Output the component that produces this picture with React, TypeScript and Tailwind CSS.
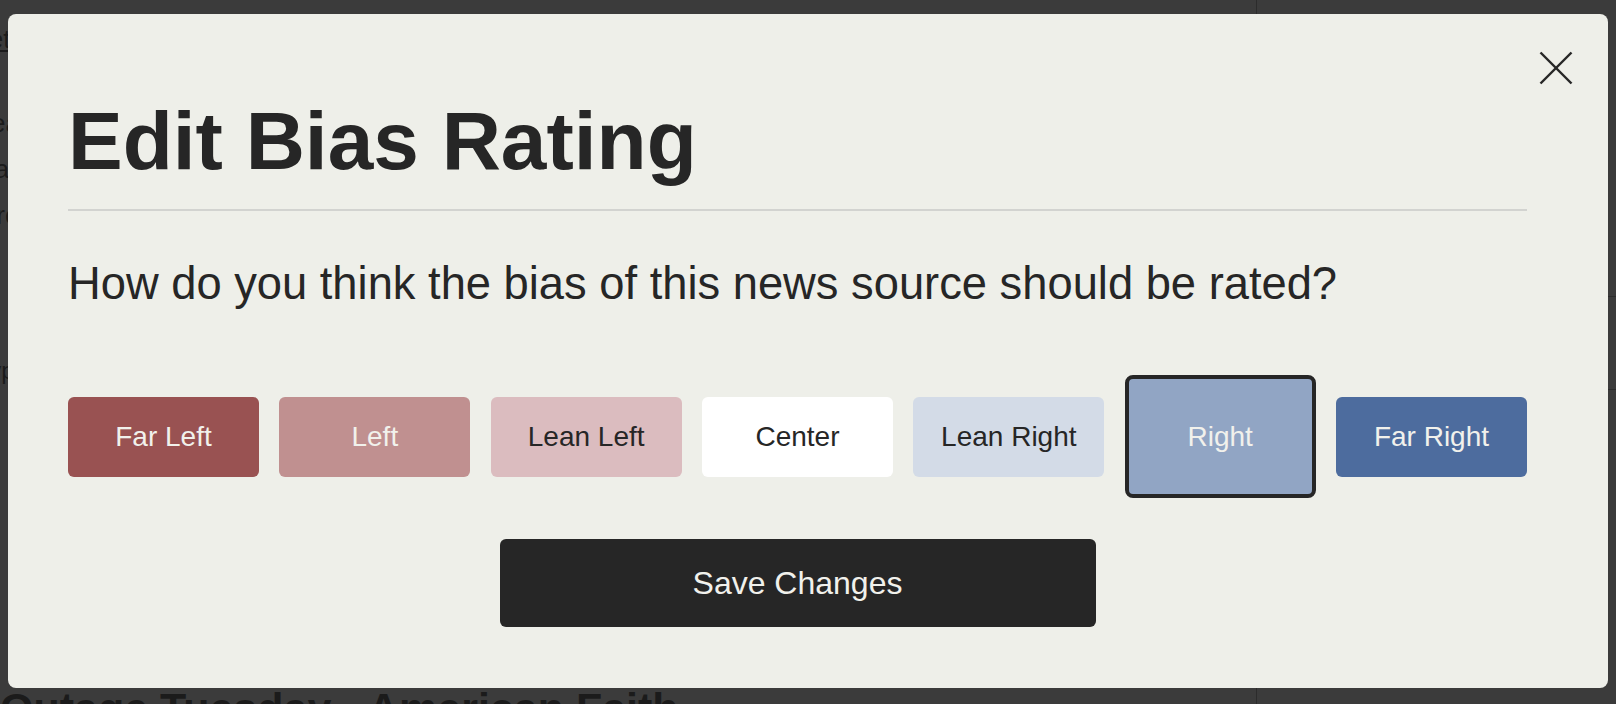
const ratings = [
  { label: "Far Left", cls: "bg-[#995252] text-[#f1f1ec]" },
  { label: "Left", cls: "bg-[#c09090] text-[#f1f1ec]" },
  { label: "Lean Left", cls: "bg-[#dbbcbf] text-[#262626]" },
  { label: "Center", cls: "bg-white text-[#262626]" },
  { label: "Lean Right", cls: "bg-[#d3dbe7] text-[#262626]" },
  { label: "Right", cls: "bg-[#91a5c4] text-[#f1f1ec]" },
  { label: "Far Right", cls: "bg-[#4d6c9e] text-[#f1f1ec]" },
];

const selected = "Right";

function BackgroundPage() {
  // dimmed page behind the modal, only slivers of it show
  return (
    <div className="flex h-full w-full">
      <div className="flex w-[1257px] shrink-0 flex-col border-r border-[#2c2c2c] pt-[20px] text-[#1b1b1b]">
        <span className="ml-[-30px] text-[26px] underline">Details</span>
        <div className="ml-[-24px] mt-[50px] flex flex-col gap-[18px] text-[26px] leading-[28px]">
          <span>Year</span>
          <span>Rating</span>
          <span>Group</span>
        </div>
        <div className="ml-[-24px] mt-[100px] flex flex-col gap-[6px] text-[24px] leading-[24px]">
          <span>e.</span>
          <span>Type</span>
        </div>
        <div className="mt-[176px] h-px w-full bg-[#2c2c2c]" />
        <div className="mt-[128px] whitespace-nowrap text-[43px] font-bold leading-none">
          Outage Tuesday - American Faith
        </div>
      </div>
      <div className="flex flex-1 flex-col pt-[296px]">
        <div className="h-px w-full bg-[#2c2c2c]" />
        <div className="ml-[360px] mt-[44px] h-[22px] w-[4px] bg-[#151515]" />
        <div className="mt-[26px] h-px w-full bg-[#2c2c2c]" />
      </div>
    </div>
  );
}

function CloseIcon() {
  return (
    <svg width="34" height="34" viewBox="0 0 34 34" fill="none" stroke="#262626" strokeWidth="2.4">
      <line x1="1.5" y1="1.5" x2="32.5" y2="32.5" />
      <line x1="32.5" y1="1.5" x2="1.5" y2="32.5" />
    </svg>
  );
}

export default function App() {
  return (
    <div className="relative h-[704px] w-[1616px] overflow-hidden bg-[#3b3b3b] font-['Liberation_Sans',Arial,sans-serif]">
      <BackgroundPage />

      <div className="absolute left-[8px] top-[14px] flex h-[674px] w-[1600px] flex-col rounded-lg bg-[#eeefe9] pl-[60px] pr-[81px] pt-[86px] text-[#262626]">
        <button type="button" aria-label="Close" className="absolute right-[35px] top-[37px]">
          <CloseIcon />
        </button>

        <h1 className="text-[82px] font-bold leading-none">Edit Bias Rating</h1>
        <div className="mt-[27px] h-[2px] w-full bg-[#d2d3d0]" />

        <p className="mt-[50px] text-[45.3px] leading-none">
          How do you think the bias of this news source should be rated?
        </p>

        <div className="mt-[69px] flex items-center justify-between">
          {ratings.map((r) => (
            <button
              key={r.label}
              type="button"
              className={
                r.label === selected
                  ? `flex h-[123px] w-[191px] items-center justify-center rounded-lg border-4 border-[#262626] text-[28px] ${r.cls}`
                  : `flex h-[80px] w-[191px] items-center justify-center rounded-md text-[28px] ${r.cls}`
              }
            >
              {r.label}
            </button>
          ))}
        </div>

        <button
          type="button"
          className="mt-[41px] h-[88px] w-[596px] self-center rounded-md bg-[#262626] text-[32px] text-[#f1f1ec]"
        >
          Save Changes
        </button>
      </div>
    </div>
  );
}
